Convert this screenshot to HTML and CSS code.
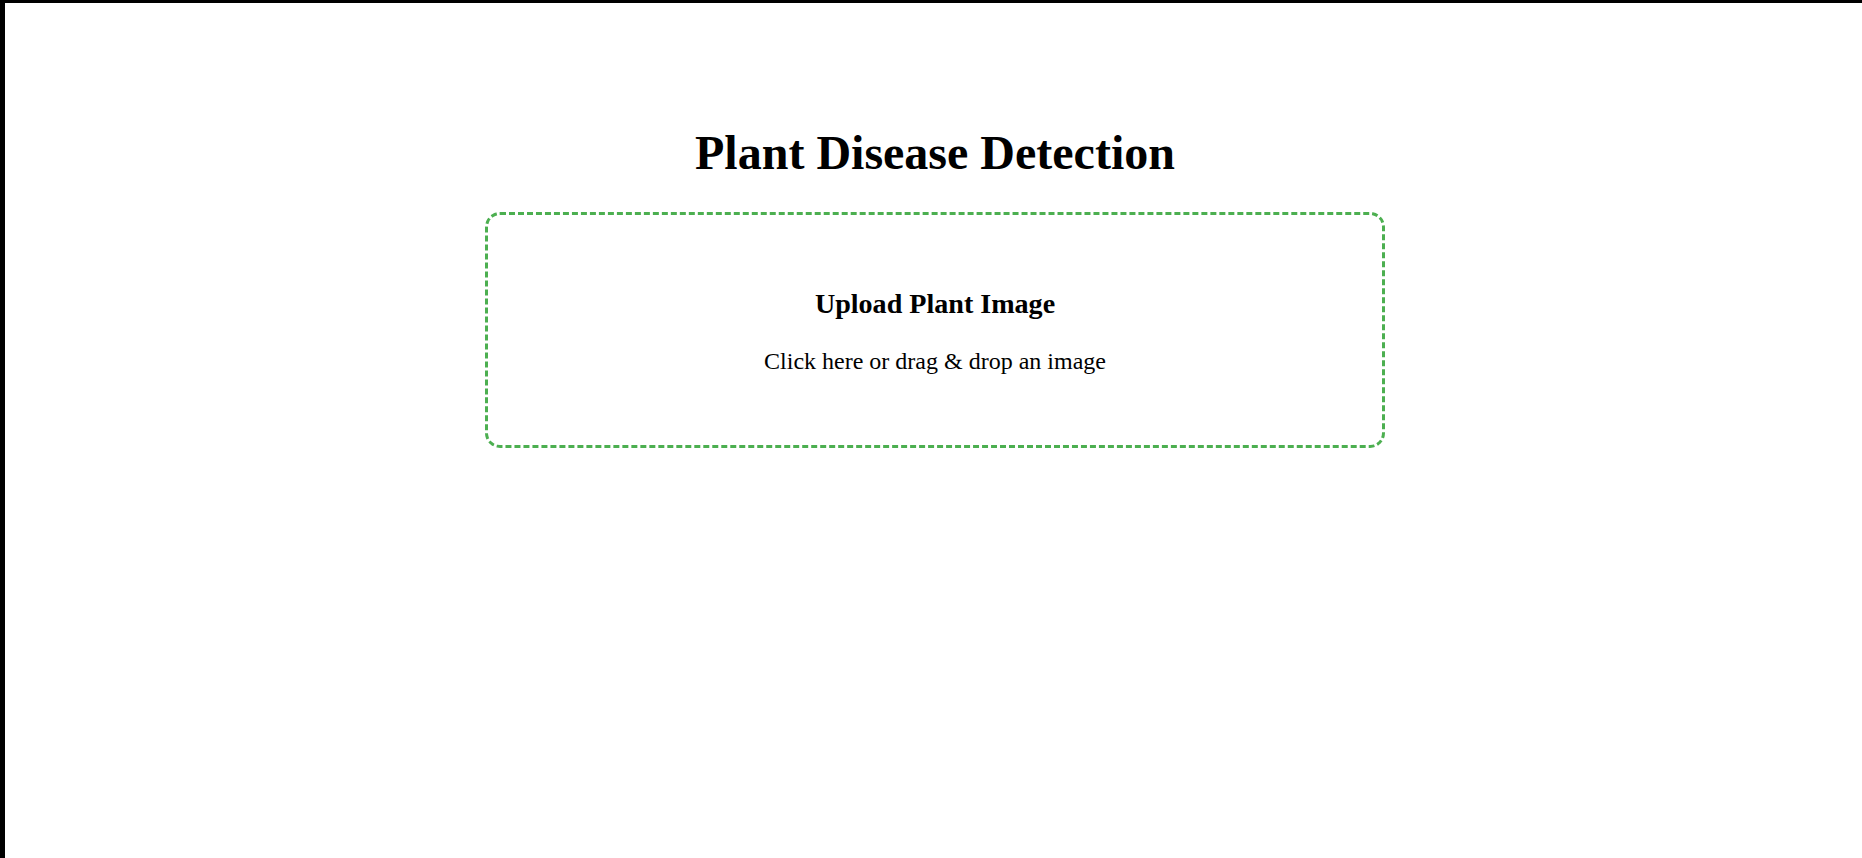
FILE: index.html
```html
<!DOCTYPE html>
<html lang="en">
<head>
<meta charset="utf-8">
<title>Plant Disease Detection</title>
<link rel="stylesheet" href="styles.css">
</head>
<body>
  <main class="page">
    <h1 class="title">Plant Disease Detection</h1>
    <div class="upload-box">
      <h3 class="upload-title">Upload Plant Image</h3>
      <p class="upload-hint">Click here or drag &amp; drop an image</p>
    </div>
  </main>
</body>
</html>
```

FILE: styles.css
```css
html, body {
  height: 100%;
}
body {
  margin: 0;
  box-sizing: border-box;
  border-top: 3px solid #000;
  border-left: 5px solid #000;
  background: #fff;
  color: #000;
  font-family: "Liberation Serif", "Times New Roman", serif;
  font-size: 24px;
  line-height: 1.15;
}
.page {
  padding: 90px 0 0 3px;
  display: flex;
  flex-direction: column;
  align-items: center;
}
.title {
  font-size: 48px;
  font-weight: bold;
  margin: 32px 0 32px;
  line-height: 1.15;
  text-align: center;
}
.upload-box {
  box-sizing: border-box;
  width: 900px;
  border: 3px dashed #4caf50;
  border-radius: 15px;
  padding: 45px;
  text-align: center;
  cursor: pointer;
}
.upload-title {
  font-size: 28.08px;
  font-weight: bold;
  margin: 28px 0;
  line-height: 1.15;
}
.upload-hint {
  font-size: 24px;
  margin: 24px 0;
  line-height: 1.15;
}
```
